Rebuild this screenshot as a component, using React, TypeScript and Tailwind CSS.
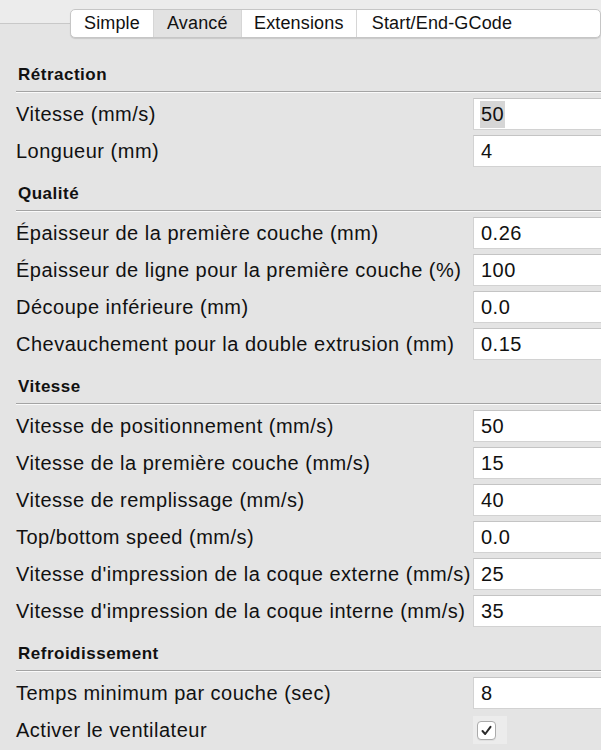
import React from "react";

type Row = { label: string; value?: string; selected?: boolean; checkbox?: boolean };

const sections: { title: string; rows: Row[] }[] = [
  {
    title: "Rétraction",
    rows: [
      { label: "Vitesse (mm/s)", value: "50", selected: true },
      { label: "Longueur (mm)", value: "4" },
    ],
  },
  {
    title: "Qualité",
    rows: [
      { label: "Épaisseur de la première couche (mm)", value: "0.26" },
      { label: "Épaisseur de ligne pour la première couche (%)", value: "100" },
      { label: "Découpe inférieure (mm)", value: "0.0" },
      { label: "Chevauchement pour la double extrusion (mm)", value: "0.15" },
    ],
  },
  {
    title: "Vitesse",
    rows: [
      { label: "Vitesse de positionnement (mm/s)", value: "50" },
      { label: "Vitesse de la première couche (mm/s)", value: "15" },
      { label: "Vitesse de remplissage (mm/s)", value: "40" },
      { label: "Top/bottom speed (mm/s)", value: "0.0" },
      { label: "Vitesse d'impression de la coque externe (mm/s)", value: "25" },
      { label: "Vitesse d'impression de la coque interne (mm/s)", value: "35" },
    ],
  },
  {
    title: "Refroidissement",
    rows: [
      { label: "Temps minimum par couche (sec)", value: "8" },
      { label: "Activer le ventilateur", checkbox: true },
    ],
  },
];

function Tabs() {
  return (
    <div className="flex h-[29px] bg-white border border-[#c6c6c6] rounded-[5px] shadow-[0_1px_1px_rgba(0,0,0,0.12)] text-[18px] tracking-[0.15px] text-[#111]">
      <div className="w-[84px] flex items-center justify-center">Simple</div>
      <div className="w-[90px] flex items-center justify-center bg-[#e2e2e2] border-l border-[#d6d6d6]">
        Avancé
      </div>
      <div className="w-[118px] flex items-center justify-center border-l border-[#d6d6d6]">
        Extensions
      </div>
      <div className="w-[250px] flex items-center pl-[15px] border-l border-[#d6d6d6]">
        Start/End-GCode
      </div>
    </div>
  );
}

function SettingRow({ row }: { row: Row }) {
  return (
    <div className="flex items-center h-[32px]">
      <div className="w-[457px] shrink-0 text-[20px] tracking-[0.5px] text-[#111] whitespace-nowrap">
        {row.label}
      </div>
      {row.checkbox ? (
        <div className="w-[34px] h-[28px] bg-[#ececec] flex items-center pl-[4px]">
          <div className="w-[19px] h-[19px] rounded-[4px] border border-[#ababab] bg-white flex items-center justify-center shadow-[0_1px_0_rgba(0,0,0,0.05)]">
            <svg width="13" height="13" viewBox="0 0 13 13">
              <path d="M2.5 7 L5.2 10 L10.5 2.8" fill="none" stroke="#2a2a2a" strokeWidth="2" strokeLinecap="round" strokeLinejoin="round" />
            </svg>
          </div>
        </div>
      ) : (
        <div className="w-[140px] shrink-0 h-[32px] bg-white border border-[#d2d2d2] border-t-[#c4c4c4] flex items-center pl-[6px] text-[20px] tracking-[0.5px] text-[#111]">
          <span className={row.selected ? "bg-[#d6d6d6] h-[27px] flex items-center px-px" : "px-px"}>
            {row.value}
          </span>
        </div>
      )}
    </div>
  );
}

export default function App() {
  return (
    <div className="w-[601px] h-[750px] overflow-hidden bg-[#e4e4e4] font-['Liberation_Sans',Arial,sans-serif]">
      <div className="pt-[9px] pl-[70px] bg-[linear-gradient(to_bottom,#ececec_0,#ececec_23px,#c8c8c8_23px,#c8c8c8_24px,#e4e4e4_24px)]">
        <Tabs />
      </div>
      <div className="pl-4 pt-[25px]">
        {sections.map((s, i) => (
          <section key={s.title} className={i > 0 ? "mt-[15px]" : ""}>
            <div className="h-6 flex items-center pl-[2px] font-bold text-[17px] tracking-[0.5px] text-[#111]">
              {s.title}
            </div>
            <div className="mt-1 border-t border-[#a4a4a4] border-b border-b-[#fafafa]" />
            <div className="mt-[5px] flex flex-col gap-[5px]">
              {s.rows.map((r) => (
                <SettingRow key={r.label} row={r} />
              ))}
            </div>
          </section>
        ))}
      </div>
    </div>
  );
}
